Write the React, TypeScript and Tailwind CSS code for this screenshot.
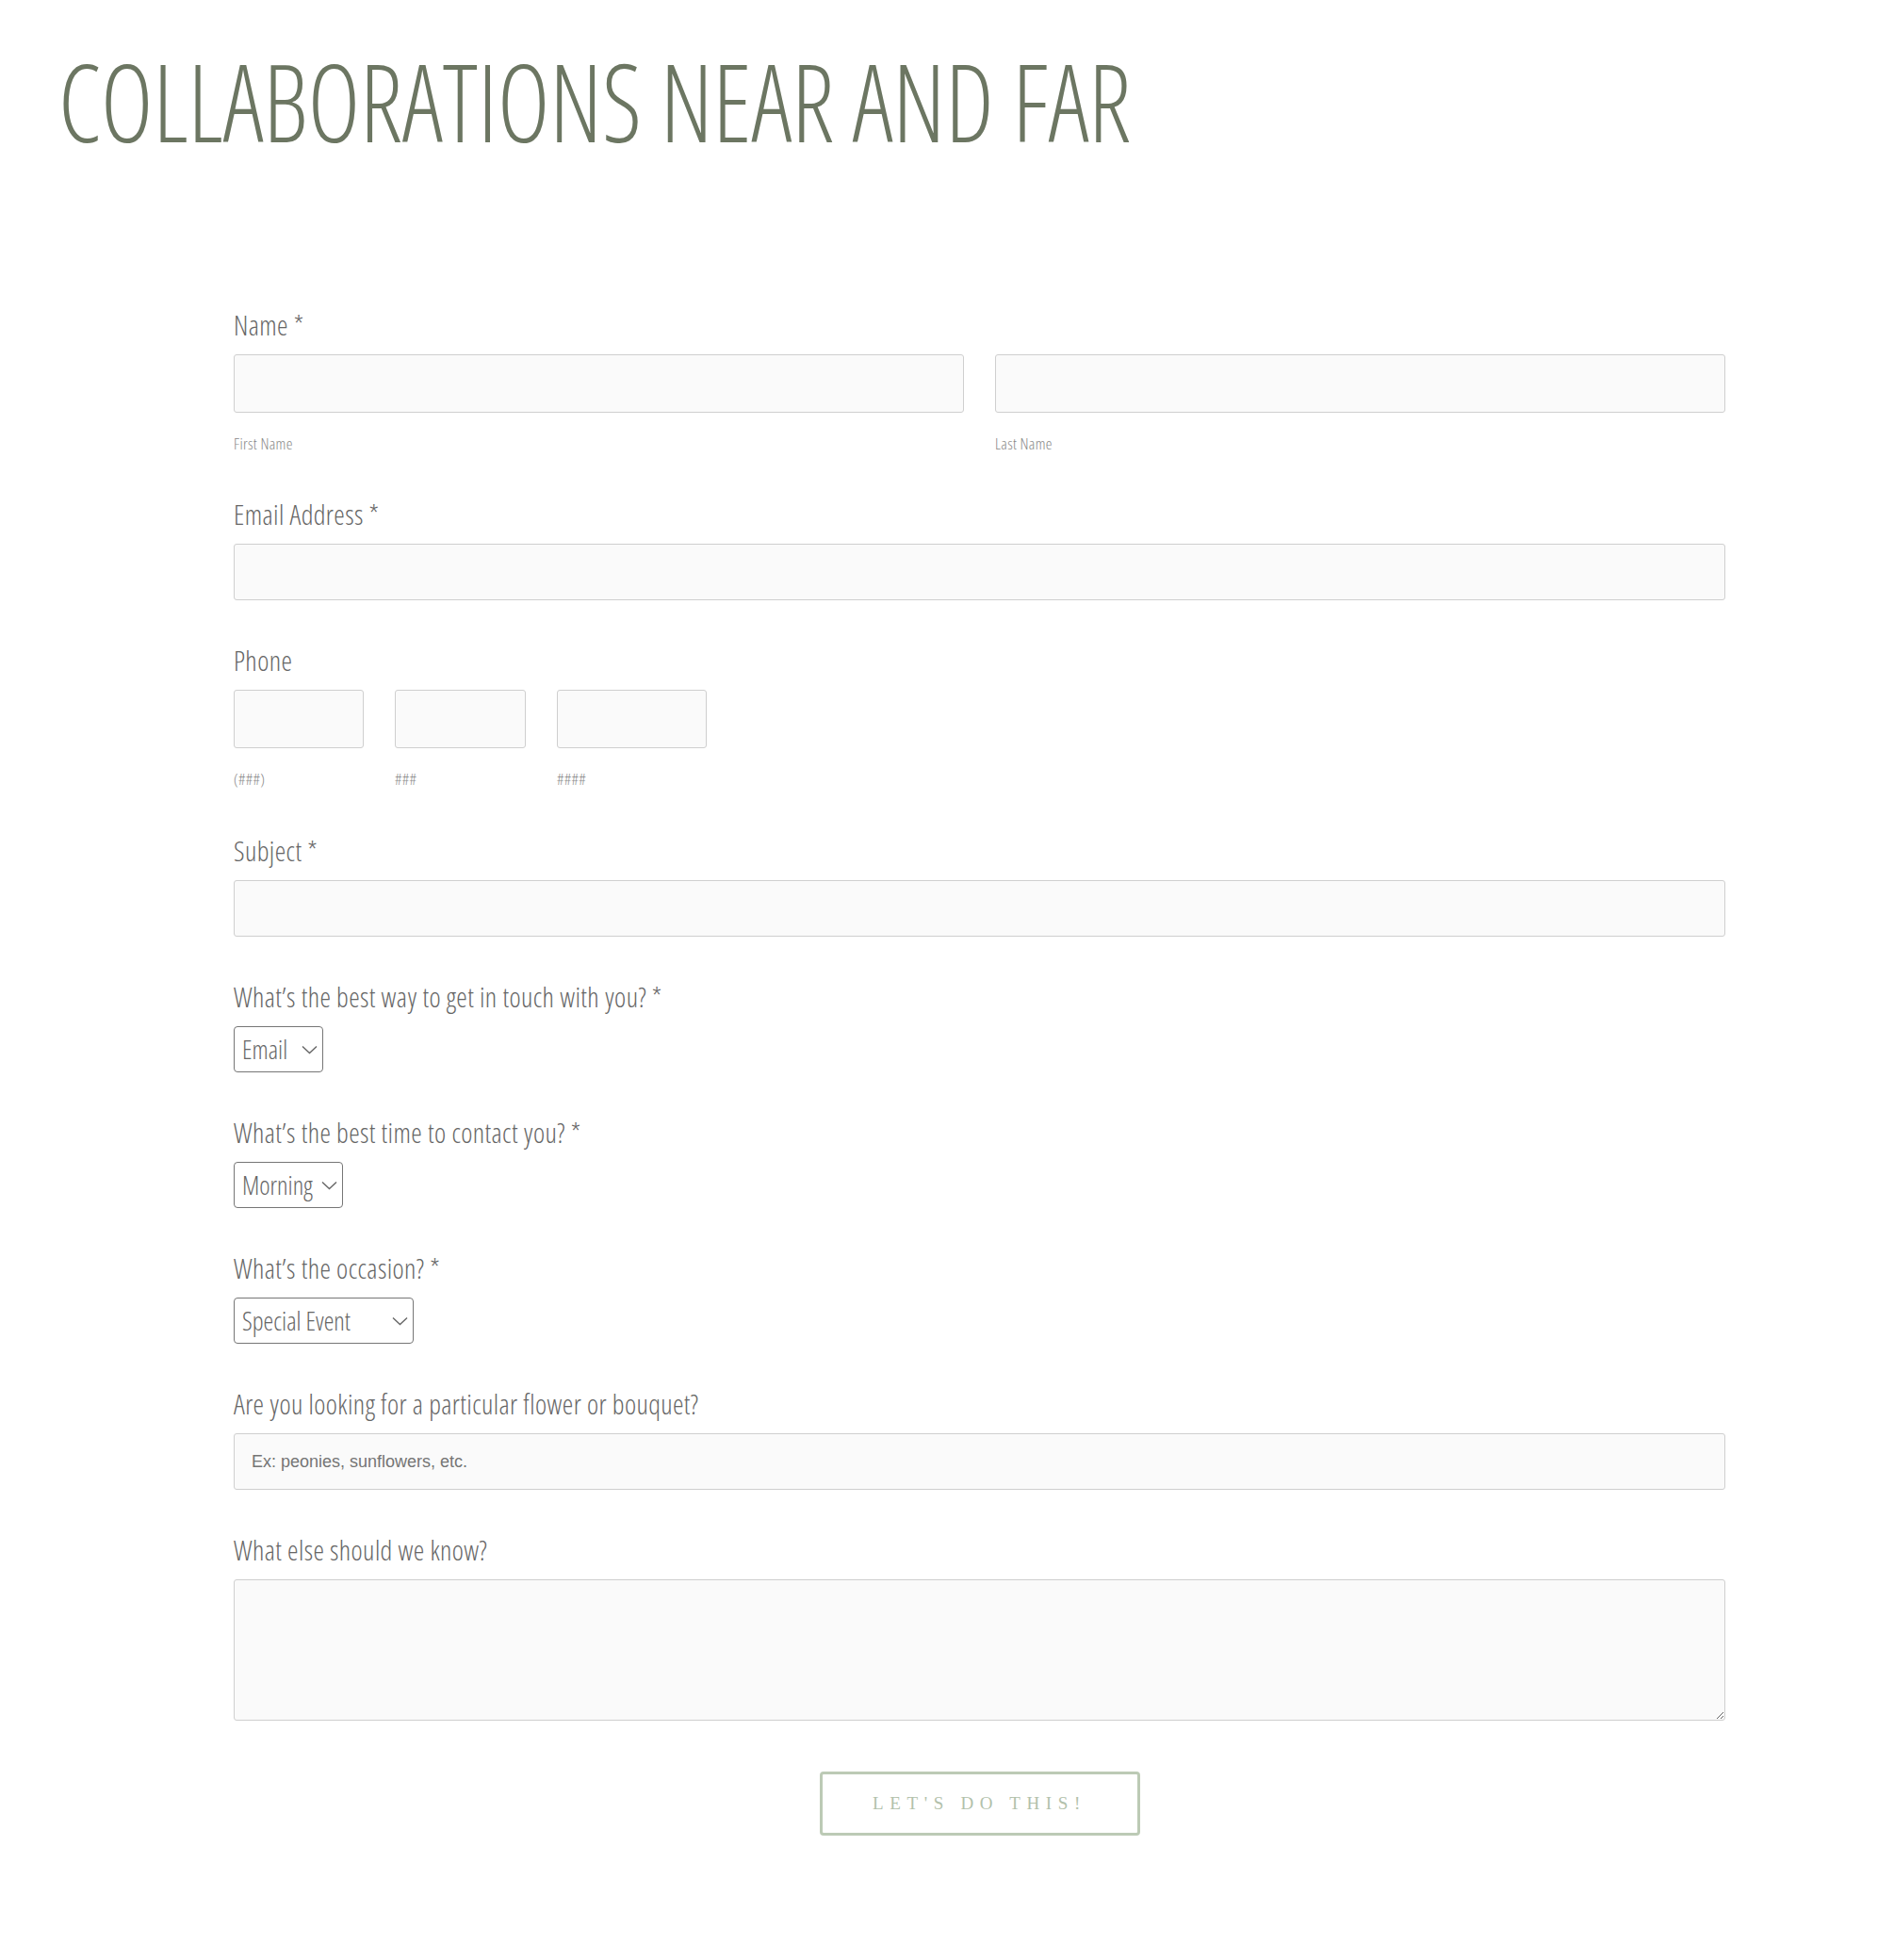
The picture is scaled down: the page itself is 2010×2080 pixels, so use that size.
import React from "react";

const Chevron = () => (
  <svg width="17" height="10" viewBox="0 0 17 10" className="pointer-events-none absolute right-[6px] top-1/2 -translate-y-1/2">
    <polyline points="1,1.5 8.5,8.5 16,1.5" fill="none" stroke="#666" strokeWidth="1.4" />
  </svg>
);

function Select({ value, w }: { value: string; w: string }) {
  return (
    <div className={`relative h-[49px] ${w}`}>
      <select
        defaultValue={value}
        className="h-full w-full appearance-none rounded-[4px] border border-[#767676] bg-white pl-[8px] pr-[28px] text-[27px] leading-[40px] font-light font-stretch-condensed text-[#666] outline-none"
      >
        <option>{value}</option>
      </select>
      <Chevron />
    </div>
  );
}

const labelCls = "block text-[29px] leading-[32px] tracking-[0.4px] font-light font-stretch-condensed text-[#666]";
const subCls = "block text-[17px] leading-[20px] tracking-[0.3px] font-light font-stretch-condensed text-[#888]";
const inputCls = "block w-full rounded-[3px] border border-[#cfcfcf] bg-[#fafafa] outline-none";

export default function App() {
  return (
    <div className="min-h-[2080px] bg-white font-['Open_Sans',sans-serif]">
      <h1 className="pl-[62px] pt-[49px] text-[115px] leading-[115px] font-light font-stretch-condensed text-[#6c7662] whitespace-nowrap">
        <span className="inline-block origin-left scale-x-[0.917]">COLLABORATIONS NEAR AND FAR</span>
      </h1>

      <form className="ml-[248px] mt-[165px] flex w-[1583px] flex-col" onSubmit={(e) => e.preventDefault()}>
        {/* Name */}
        <label className={`${labelCls} mb-[15px]`}>Name *</label>
        <div className="grid grid-cols-2 gap-x-[33px]">
          <div>
            <input className={`${inputCls} h-[62px]`} />
            <span className={`${subCls} mt-[23px]`}>First Name</span>
          </div>
          <div>
            <input className={`${inputCls} h-[62px]`} />
            <span className={`${subCls} mt-[23px]`}>Last Name</span>
          </div>
        </div>

        {/* Email */}
        <label className={`${labelCls} mt-[49px] mb-[15px]`}>Email Address *</label>
        <input className={`${inputCls} h-[60px]`} />

        {/* Phone */}
        <label className={`${labelCls} mt-[48px] mb-[15px]`}>Phone</label>
        <div className="flex gap-x-[33px]">
          <div className="w-[138px]">
            <input className={`${inputCls} h-[62px]`} />
            <span className={`${subCls} mt-[23px]`}>(###)</span>
          </div>
          <div className="w-[139px]">
            <input className={`${inputCls} h-[62px]`} />
            <span className={`${subCls} mt-[23px]`}>###</span>
          </div>
          <div className="w-[159px]">
            <input className={`${inputCls} h-[62px]`} />
            <span className={`${subCls} mt-[23px]`}>####</span>
          </div>
        </div>

        {/* Subject */}
        <label className={`${labelCls} mt-[50px] mb-[15px]`}>Subject *</label>
        <input className={`${inputCls} h-[60px]`} />

        {/* Contact way */}
        <label className={`${labelCls} mt-[48px] mb-[15px]`}>What’s the best way to get in touch with you? *</label>
        <Select value="Email" w="w-[95px]" />

        <label className={`${labelCls} mt-[48px] mb-[15px]`}>What’s the best time to contact you? *</label>
        <Select value="Morning" w="w-[116px]" />

        <label className={`${labelCls} mt-[48px] mb-[15px]`}>What’s the occasion? *</label>
        <Select value="Special Event" w="w-[191px]" />

        <label className={`${labelCls} mt-[48px] mb-[15px]`}>Are you looking for a particular flower or bouquet?</label>
        <input
          placeholder="Ex: peonies, sunflowers, etc."
          className={`${inputCls} h-[60px] px-[18px] font-['Liberation_Sans',Arial,sans-serif] text-[18px] text-[#555] placeholder:text-[#757575]`}
        />

        <label className={`${labelCls} mt-[48px] mb-[15px]`}>What else should we know?</label>
        <textarea className={`${inputCls} h-[150px] resize-y`} />

        <div className="mt-[54px] flex justify-center">
          <button
            type="submit"
            className="h-[68px] w-[340px] rounded-[4px] border-[3px] border-[#bccab5] bg-white font-['Liberation_Serif',serif] text-[19px] tracking-[0.35em] text-[#b2c1ab]"
          >
            LET'S DO THIS!
          </button>
        </div>
      </form>
    </div>
  );
}
